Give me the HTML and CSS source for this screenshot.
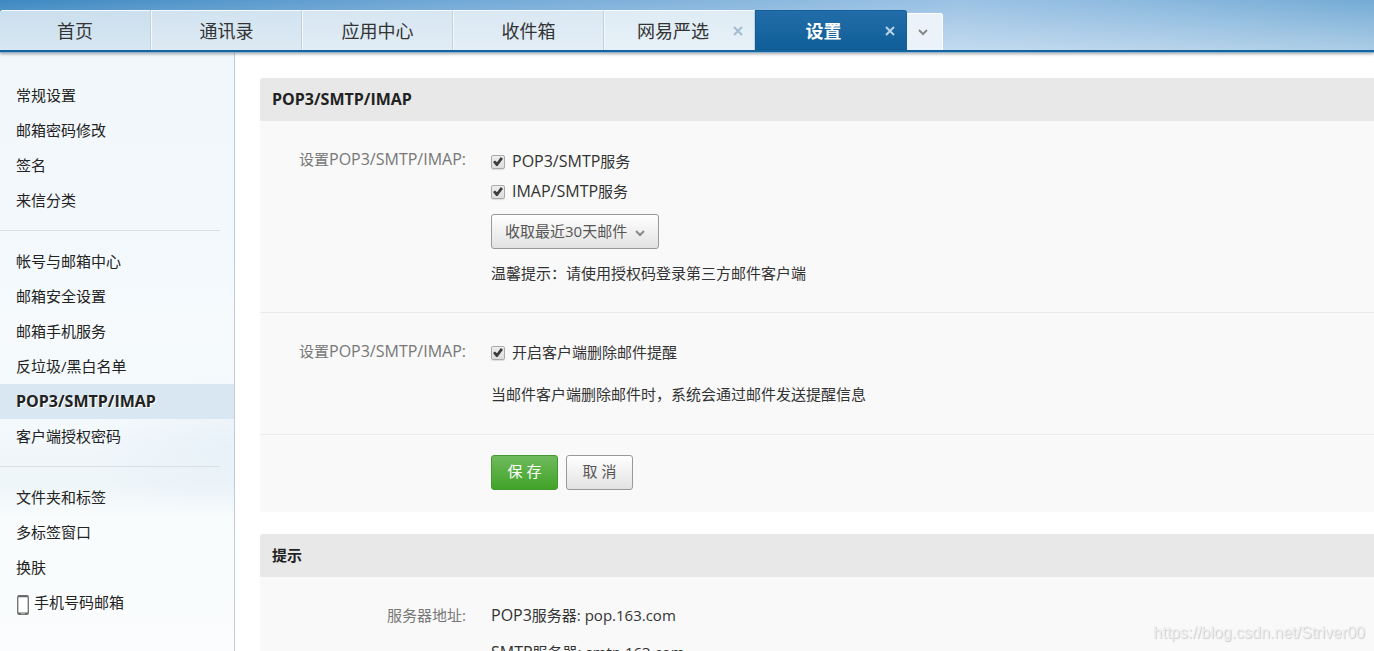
FILE: index.html
```html
<!DOCTYPE html>
<html lang="zh-CN">
<head>
<meta charset="utf-8">
<title>设置</title>
<link rel="stylesheet" href="styles.css">
</head>
<body>
<header class="topbar">
  <nav class="tabs">
    <a class="tab" href="#">首页</a>
    <a class="tab" href="#">通讯录</a>
    <a class="tab" href="#">应用中心</a>
    <a class="tab" href="#">收件箱</a>
    <div class="tab"><a class="tab-link" href="#">网易严选</a>
      <button class="tab-close" type="button" aria-label="关闭"><svg width="10" height="10" viewBox="0 0 10 10"><path d="M1 1l8 8M9 1l-8 8"/></svg></button>
    </div>
    <div class="tab tab-active"><a class="tab-link" href="#">设置</a>
      <button class="tab-close" type="button" aria-label="关闭"><svg width="10" height="10" viewBox="0 0 10 10"><path d="M1 1l8 8M9 1l-8 8"/></svg></button>
    </div>
    <button class="tab-more" type="button" aria-label="更多"><svg width="10" height="7" viewBox="0 0 10 7"><path d="M1 1l4 4 4-4"/></svg></button>
  </nav>
</header>
<div class="shell">
  <aside class="sidebar">
    <ul class="menu">
      <li><a href="#">常规设置</a></li>
      <li><a href="#">邮箱密码修改</a></li>
      <li><a href="#">签名</a></li>
      <li><a href="#">来信分类</a></li>
    </ul>
    <ul class="menu">
      <li><a href="#">帐号与邮箱中心</a></li>
      <li><a href="#">邮箱安全设置</a></li>
      <li><a href="#">邮箱手机服务</a></li>
      <li><a href="#">反垃圾/黑白名单</a></li>
      <li><a class="current" href="#"><span class="latin">POP3/SMTP/IMAP</span></a></li>
      <li><a href="#">客户端授权密码</a></li>
    </ul>
    <ul class="menu">
      <li><a href="#">文件夹和标签</a></li>
      <li><a href="#">多标签窗口</a></li>
      <li><a href="#">换肤</a></li>
      <li><a class="with-icon" href="#"><svg width="12" height="20" viewBox="0 0 12 20"><rect x="0.7" y="0.7" width="10.6" height="18.6" rx="1.5" fill="#fff" stroke="#777" stroke-width="1.4"/><path d="M1 1.4h10M1 18.4h10" stroke="#666" stroke-width="1.8"/><path d="M4 18.4h4" stroke="#bbb"/></svg>手机号码邮箱</a></li>
    </ul>
  </aside>
  <main class="content">
    <section class="panel">
      <h2 class="panel-title"><span class="latin">POP3/SMTP/IMAP</span></h2>
      <div class="row">
        <div class="row-label">设置<span class="latin">POP3/SMTP/IMAP:</span></div>
        <div class="row-body">
          <label class="check"><input type="checkbox" checked><span><span class="latin">POP3/SMTP</span>服务</span></label>
          <label class="check"><input type="checkbox" checked><span><span class="latin">IMAP/SMTP</span>服务</span></label>
          <div class="select">
            <select aria-label="收取范围"><option>收取最近30天邮件</option></select>
            <svg width="10" height="7" viewBox="0 0 10 7"><path d="M1 1l4 4 4-4"/></svg>
          </div>
          <p class="note">温馨提示：请使用授权码登录第三方邮件客户端</p>
        </div>
      </div>
      <div class="row">
        <div class="row-label">设置<span class="latin">POP3/SMTP/IMAP:</span></div>
        <div class="row-body row-reminder">
          <label class="check"><input type="checkbox" checked><span>开启客户端删除邮件提醒</span></label>
          <p class="note">当邮件客户端删除邮件时，系统会通过邮件发送提醒信息</p>
        </div>
      </div>
      <div class="row row-actions">
        <div class="row-label"></div>
        <div class="actions">
          <button class="btn btn-primary" type="submit">保 存</button>
          <button class="btn" type="button">取 消</button>
        </div>
      </div>
    </section>
    <section class="panel">
      <h2 class="panel-title">提示</h2>
      <div class="row">
        <div class="row-label">服务器地址:</div>
        <div class="row-body servers">
          <p><span class="latin">POP3</span>服务器: pop.163.com</p>
          <p><span class="latin">SMTP</span>服务器: smtp.163.com</p>
          <p><span class="latin">IMAP</span>服务器: imap.163.com</p>
        </div>
      </div>
    </section>
  </main>
</div>
<div class="watermark">https://blog.csdn.net/Striver00</div>
</body>
</html>
```
FILE: styles.css
```css
* { box-sizing: border-box; }
body {
  margin: 0;
  height: 100vh;
  display: flex;
  flex-direction: column;
  overflow: hidden;
  background: #fff;
  color: #333;
  font: 15px/30px "Open Sans", "Noto Sans CJK SC", sans-serif;
}
a { color: inherit; text-decoration: none; }
p, h2, ul { margin: 0; padding: 0; }
button { font: inherit; padding: 0; border: 0; background: none; cursor: pointer; }
svg { display: block; flex: none; fill: none; }
.latin { font-size: 16px; line-height: 20px; }

.topbar {
  position: relative;
  flex: none;
  padding-top: 10px;
  border-bottom: 2px solid #1464a0;
  box-shadow: 0 1px 0 #8db3d0, 0 2px 3px rgba(0, 0, 0, 0.35);
  background:
    linear-gradient(to top, rgba(255, 255, 255, 0.4), rgba(255, 255, 255, 0)),
    linear-gradient(to right, #3d88c1, #70a8d6 32%, #9bc2e4 70%, #8cb9df 83%, #74abd5);
}
.tabs { display: flex; align-items: flex-end; }
.tab {
  position: relative;
  width: 151px;
  height: 40px;
  display: flex;
  align-items: center;
  justify-content: center;
  border-top: 1px solid #f6fafd;
  border-left: 1px solid #f4f8fb;
  border-right: 1px solid #c0d1dd;
  background: linear-gradient(rgba(255, 255, 255, 0), rgba(255, 255, 255, 0.25)), #d2e3f0;
  font-size: 18px;
}
.tab:first-child { border-left: 0; border-top-left-radius: 3px; background-color: #cbdfee; }
.tab:nth-child(n+3) { background-color: #d7e6f2; }
.tab:nth-child(n+4) { background-color: #dae8f3; }
.tab:nth-child(5) { background-color: #dfecf5; padding-right: 13px; }
.tab.tab-active {
  width: 152px;
  padding-right: 15px;
  border: 1px solid #11609b;
  border-bottom: 0;
  border-radius: 0 3px 0 0;
  background: linear-gradient(#226da9, #0f5e98);
  color: #fff;
  font-weight: 700;
}
.tab-close { position: absolute; right: 11px; top: 15px; height: 10px; }
.tab-close path { stroke: #a4bccf; stroke-width: 2; }
.tab-active .tab-close path { stroke: #b9d3e7; }
.tab-more {
  width: 36px;
  height: 37px;
  display: grid;
  place-items: center;
  padding-right: 3px;
  border: 1px solid #fff;
  border-bottom: 0;
  border-left: 0;
  border-radius: 0 3px 0 0;
  background: #ebf2f9;
}
.tab-more path, .select path { stroke: #888; stroke-width: 2; }

.shell { flex: 1; min-height: 0; display: flex; }
.sidebar {
  flex: none;
  width: 235px;
  padding-top: 26px;
  border-right: 1px solid #bfccd7;
  background:
    radial-gradient(ellipse 150px 70px at 100% 66%, rgba(226, 237, 248, 0.6), rgba(226, 237, 248, 0)),
    linear-gradient(#f2f7fb, #f2f8fc 28%, #f6fafd 45%, #f4f9fc 62%, #edf5f8 72%, #f9fcfd 78%, #fafcfd);
  color: #222;
}
.menu { list-style: none; position: relative; }
.menu + .menu { margin-top: 12px; padding-top: 14px; }
.menu + .menu::before {
  content: "";
  position: absolute;
  top: 0;
  left: 0;
  right: 14px;
  border-top: 1px solid #dbe0e4;
}
.menu a { display: block; height: 35px; padding-left: 16px; line-height: 35px; }
.menu .current { background: #d9e7f2; font-weight: 700; text-shadow: 1px 1px 0 #fff; }
.menu .with-icon { display: flex; align-items: center; gap: 5px; padding-left: 17px; }
.with-icon svg { margin-top: 5px; }

.content { flex: 1; min-width: 0; padding: 26px 0 0 25px; overflow: hidden; }
.panel { margin-bottom: 22px; border-radius: 3px 0 0 3px; background: #f9f9f9; overflow: hidden; }
.panel-title {
  height: 43px;
  padding-left: 12px;
  background: #e8e8e8;
  color: #222;
  font-size: 15px;
  line-height: 43px;
}
.row { display: flex; gap: 25px; padding: 23px 0; }
.row + .row { border-top: 1px solid #ebebeb; }
.row-label { flex: none; width: 206px; text-align: right; color: #777; }
.row-body { flex: 1; min-width: 0; padding: 2px 0 1px; }
.row-reminder { padding: 1px 0 2px; }
.check { display: flex; align-items: center; width: fit-content; }
.check input {
  appearance: none;
  display: grid;
  place-items: center;
  width: 14px;
  height: 14px;
  margin: 1px 7px 0 0;
  border: 1px solid #aaa;
  border-radius: 2px;
  background: linear-gradient(#eee, #ddd);
  box-shadow: 0 1px 1px #ddd;
}
.check input:checked::after {
  content: "";
  width: 10px;
  height: 10px;
  background: #3c3c3c;
  clip-path: polygon(0 55%, 20% 40%, 40% 58%, 78% 5%, 100% 22%, 45% 95%, 32% 95%);
}
.select { position: relative; width: 168px; margin-top: 8px; }
.select select {
  appearance: none;
  display: block;
  width: 100%;
  height: 35px;
  padding: 0 13px 2px;
  border: 1px solid #999;
  border-radius: 3px;
  background: linear-gradient(#fff, #e2e2e2);
  color: #555;
  font: inherit;
}
.select svg { position: absolute; right: 14px; top: 16px; pointer-events: none; }
.note { margin: 9px 0 0; }
.check + .note { margin-top: 12px; }
.row-actions { padding: 20px 0 22px; }
.actions { display: flex; gap: 8px; }
.btn {
  width: 67px;
  height: 35px;
  padding-bottom: 4px;
  border: 1px solid #999;
  border-radius: 3px;
  background: linear-gradient(#fff, #e2e2e2);
  color: #555;
}
.btn-primary { border-color: #45982f; background: linear-gradient(#6fba5d, #41a328); color: #fff; }
.servers { display: grid; gap: 7px; padding-top: 0; }
.watermark {
  position: fixed;
  right: 9px;
  bottom: 6px;
  color: #eee;
  font: 16px/24px "Liberation Sans", Arial, sans-serif;
  text-shadow: 1px 1px 1px #ccc;
}
```
